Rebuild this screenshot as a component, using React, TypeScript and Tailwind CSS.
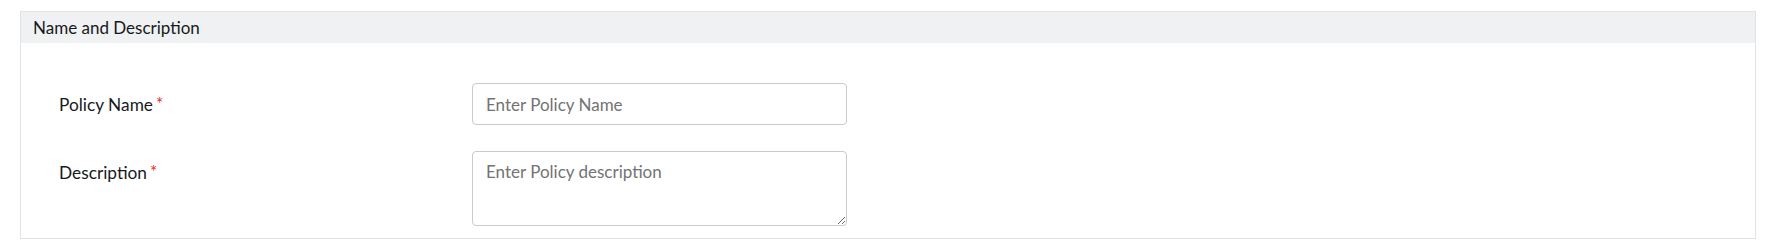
import React from "react";

export default function App() {
  return (
    <div className="w-[1771px] h-[241px] bg-white pt-[11px] pl-[20px] pr-[15px]" style={{ fontFamily: "Lato, 'Open Sans', sans-serif" }}>
      <div className="border border-[#e2e3e6] bg-white">
        <div className="h-[31px] bg-[#f0f1f3] flex items-center pl-[12px] text-[17px] text-[#161a20]">
          Name and Description
        </div>
        <div className="pt-[40px] pb-[12px] pl-[38px] flex flex-col gap-[26px]">
          <div className="flex items-start">
            <label className="w-[413px] pt-[10px] text-[17.3px] text-[#161a20] leading-[24px]">
              Policy Name<span className="text-[#f0282a] text-[17px] leading-none relative -top-[1px] ml-[3px]">*</span>
            </label>
            <input
              type="text"
              placeholder="Enter Policy Name"
              className="w-[375px] h-[42px] border border-[#c9c9d1] rounded-[4px] px-[13px] text-[17px] text-[#333] placeholder:text-[#737373] outline-none"
            />
          </div>
          <div className="flex items-start">
            <label className="w-[413px] pt-[10px] text-[17.3px] text-[#161a20] leading-[24px]">
              Description<span className="text-[#f0282a] text-[17px] leading-none relative -top-[1px] ml-[3px]">*</span>
            </label>
            <textarea
              placeholder="Enter Policy description"
              className="w-[375px] h-[75px] border border-[#c9c9d1] rounded-[4px] px-[13px] pt-[8px] text-[17px] leading-[24px] text-[#333] placeholder:text-[#737373] outline-none"
            />
          </div>
        </div>
      </div>
    </div>
  );
}
